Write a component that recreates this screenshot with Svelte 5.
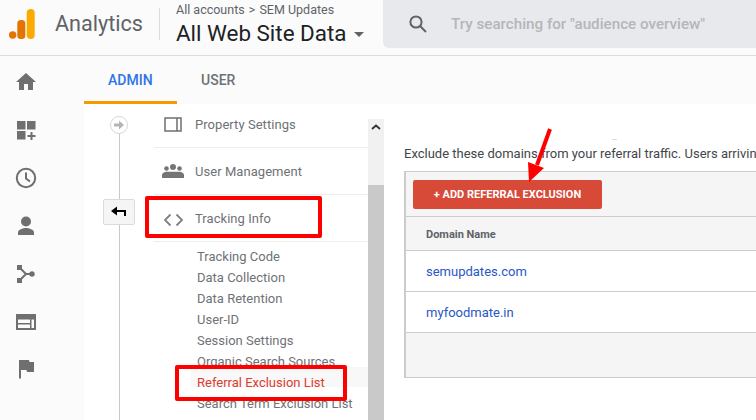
<script>
	const subItems = [
		'Tracking Code',
		'Data Collection',
		'Data Retention',
		'User-ID',
		'Session Settings',
		'Organic Search Sources',
		'Referral Exclusion List',
		'Search Term Exclusion List'
	];
	const domains = ['semupdates.com', 'myfoodmate.in'];
</script>

<div class="page">
	<header class="topbar">
		<svg class="logo" width="26" height="30" viewBox="0 0 26 30">
			<circle cx="3.7" cy="26" r="3.7" fill="#e37400" />
			<rect x="8.300" y="11" width="8" height="19" rx="3.500" fill="#e37400" />
			<rect x="17.700" y="0" width="8" height="30" rx="4" fill="#f9ab00" />
		</svg>
		<span class="brand">Analytics</span>
		<div class="view">
			<div class="crumbs">All accounts <span class="sep">&gt;</span> SEM Updates</div>
			<div class="viewname">All Web Site Data <i class="caret"></i></div>
		</div>
		<div class="search">
			<svg width="20" height="20" viewBox="0 0 20 20" fill="none" stroke="#5f6368" stroke-width="2">
				<circle cx="8" cy="8" r="5.6" />
				<path d="M12 12l6 6" />
			</svg>
			<span>Try searching for "audience overview"</span>
		</div>
	</header>

	<div class="below">
		<nav class="rail">
			<svg viewBox="0 0 24 24" width="24" height="24"><path fill="#6f6f6f" d="M10 20v-6h4v6h5v-8h3L12 3 2 12h3v8z" /></svg>
			<svg viewBox="0 0 24 24" width="24" height="24"><path fill="#6f6f6f" d="M3 3h8.500v8.500H3zM13 3h8.500v8.500H13zM3 13h8.500v8.500H3zM16.500 14h2v3h3v2h-3v3h-2v-3h-3v-2h3z" /></svg>
			<svg viewBox="0 0 24 24" width="24" height="24" fill="none" stroke="#6f6f6f" stroke-width="2"><circle cx="12" cy="12" r="9.200" /><path d="M12 6.500V12.500l4 3" /></svg>
			<svg viewBox="0 0 24 24" width="24" height="24"><circle cx="12" cy="7.500" r="5" fill="#6f6f6f" /><path fill="#6f6f6f" d="M4 21v-2.500c0-3 5-4.500 8-4.500s8 1.500 8 4.500V21z" /></svg>
			<svg viewBox="0 0 24 24" width="24" height="24"><path fill="none" stroke="#6f6f6f" stroke-width="2" d="M6 6l6 6-6 6M12 12h6" /><rect x="3" y="3" width="5" height="5" fill="#6f6f6f" /><rect x="3" y="16" width="5" height="5" fill="#6f6f6f" /><circle cx="18" cy="12" r="2.700" fill="#6f6f6f" /></svg>
			<svg viewBox="0 0 24 24" width="24" height="24"><path fill="#6f6f6f" fill-rule="evenodd" d="M2 4h20v16H2zM4 9.500v3.500h12V9.500zM4 14.500V18h12v-3.500zM17.500 9.500V18H20V9.500z" /></svg>
			<svg viewBox="0 0 24 24" width="24" height="24"><path fill="#6f6f6f" d="M5 2h10l.5 2H20v10h-7l-.500-2H7v8.500H5z" /></svg>
		</nav>

		<main class="main">
			<div class="tabs">
				<div class="tab active">ADMIN</div>
				<div class="tab">USER</div>
			</div>

			<div class="columns">
				<div class="timeline">
					<div class="stepdot">
						<svg width="12" height="12" viewBox="0 0 12 12"><path fill="#b5b5b5" d="M1 4.500h5V1.500L11 6 6 10.500v-3H1z" /></svg>
					</div>
					<button class="back" aria-label="Back">
						<svg width="16" height="12" viewBox="0 0 16 12"><path fill="none" stroke="#000" stroke-width="2" d="M2 5h12v5" /><path d="M0 5l6-4.500v9z" /></svg>
					</button>
				</div>

				<div class="sidenav">
					<div class="navitem first">
						<span class="navicon">
							<svg width="18" height="15" viewBox="0 0 18 15"><path fill="none" stroke="#6f6f6f" stroke-width="1.500" d="M1 1h16v13H1zM13 1v13" /></svg>
						</span>
						Property Settings
					</div>
					<div class="navitem">
						<span class="navicon">
							<svg width="22" height="14" viewBox="0 0 22 14"><g fill="#757575"><circle cx="11" cy="3" r="3" /><circle cx="4.500" cy="4.500" r="2.300" /><circle cx="17.500" cy="4.500" r="2.300" /><path d="M0 14v-3c0-2 2.500-3.300 5-3.300h12c2.500 0 5 1.300 5 3.300v3z" /></g></svg>
						</span>
						User Management
					</div>
					<div class="navitem">
						<span class="navicon">
							<svg class="codeicon" width="21" height="14" viewBox="0 0 21 14" fill="none" stroke="#808080" stroke-width="1.800"><path d="M7.500 1.500L2 7l5.500 5.500M13.500 1.500L19 7l-5.500 5.500" /></svg>
						</span>
						Tracking Info
					</div>
					<ul class="sublist">
						{#each subItems as item, i}
							<li class:current={i === 6}>{item}</li>
						{/each}
					</ul>
				</div>

				<div class="scrollbar">
					<svg width="10" height="6" viewBox="0 0 10 6"><path fill="none" stroke="#333" stroke-width="1.800" d="M1 5l4-3.500L9 5" /></svg>
					<div class="thumb"></div>
				</div>

				<section class="panel">
					<div class="smudge"></div>
					<p class="intro">Exclude these domains from your referral traffic. Users arriving</p>
					<div class="tablebox">
						<div class="toolbar">
							<button class="addbtn">+ ADD REFERRAL EXCLUSION</button>
						</div>
						<div class="thead">Domain Name</div>
						{#each domains as domain}
							<div class="row"><span class="link">{domain}</span></div>
						{/each}
						<div class="tfoot"></div>
					</div>
				</section>
			</div>
		</main>
	</div>

	<div class="mark box1"></div>
	<div class="mark box2"></div>
	<svg class="arrow" width="40" height="70" viewBox="0 0 40 70">
		<path d="M30 2L17 38" stroke="#f00" stroke-width="4" fill="none" />
		<path d="M9 55L8 35L24 41z" fill="#f00" />
	</svg>
</div>

<style>
	:global(body) {
		margin: 0;
		background: #fff;
	}

	.page {
		position: relative;
		width: 756px;
		height: 420px;
		overflow: hidden;
		background: #fafbfa;
		font-family: Roboto, "Liberation Sans", sans-serif;
	}

	.topbar {
		display: flex;
		align-items: flex-start;
		height: 55px;
		border-bottom: 1px solid #dcdcdc;
		box-sizing: content-box;
	}

	.logo {
		margin: 9px 0 0 9px;
		flex: none;
	}

	.brand {
		margin: 8px 0 0 20px;
		width: 104px;
		height: 32px;
		line-height: 32px;
		font-size: 21.6px;
		color: #5f6368;
		border-right: 1px solid #dadce0;
		flex: none;
	}

	.view {
		margin-left: 16px;
		width: 207px;
		flex: none;
	}

	.crumbs {
		margin-top: 1px;
		font-size: 12.5px;
		line-height: 17px;
		color: #5f6368;
	}

	.sep {
		margin: 0 1px;
	}

	.viewname {
		margin-top: 1px;
		font-size: 22.4px;
		line-height: 28px;
		color: #202124;
		white-space: nowrap;
	}

	.caret {
		display: inline-block;
		width: 0;
		height: 0;
		margin-left: 2px;
		vertical-align: 4px;
		border-left: 5px solid transparent;
		border-right: 5px solid transparent;
		border-top: 5px solid #5f6368;
	}

	.search {
		display: flex;
		align-items: center;
		flex: 1;
		height: 48px;
		padding-left: 25px;
		background: #e8e9ec;
		border-radius: 0 0 0 6px;
		font-size: 15.2px;
		font-weight: 500;
		color: #b4b6ba;
		white-space: nowrap;
	}

	.search span {
		margin-left: 23px;
	}

	.below {
		display: flex;
		height: 364px;
	}

	.rail {
		display: flex;
		flex-direction: column;
		align-items: center;
		gap: 24px;
		width: 52px;
		padding-top: 14px;
		margin-right: 32px;
		flex: none;
	}

	.main {
		flex: 1;
		min-width: 0;
	}

	.tabs {
		display: flex;
		height: 48px;
		margin-left: -32px;
		padding-left: 32px;
		background: #fafbfa;
	}

	.tab {
		height: 46px;
		line-height: 49px;
		padding: 0 24px;
		font-size: 14px;
		font-weight: 500;
		color: #6e7176;
	}

	.tab.active {
		width: 45px;
		color: #2f74e6;
		border-bottom: 3px solid #f59b00;
		height: 45px;
	}

	.columns {
		display: flex;
		height: 316px;
		margin-left: -32px;
		padding-left: 32px;
		background: #fff;
		background-clip: content-box;
	}

	.timeline {
		position: relative;
		display: flex;
		flex-direction: column;
		align-items: center;
		width: 70px;
		flex: none;
	}

	.timeline::before {
		content: "";
		position: absolute;
		left: 35px;
		top: 28px;
		bottom: 0;
		width: 1px;
		background: #c8c8c8;
	}

	.stepdot {
		position: relative;
		display: flex;
		align-items: center;
		justify-content: center;
		width: 16px;
		height: 16px;
		margin-top: 12px;
		border: 1px solid #d8d8d8;
		border-radius: 50%;
		background: #fff;
	}

	.back {
		position: relative;
		display: flex;
		align-items: center;
		justify-content: center;
		width: 32px;
		height: 26px;
		margin-top: 65px;
		padding: 0;
		border: 1px solid #dcdcdc;
		border-radius: 2px;
		background: #f5f5f5;
	}

	.sidenav {
		width: 214px;
		flex: none;
		background: #fff;
		font-size: 13px;
		color: #6f7276;
	}

	.navitem {
		display: flex;
		align-items: center;
		height: 46px;
		border-bottom: 1px solid #eeeeee;
		font-size: 13px;
		letter-spacing: 0.05px;
	}

	.navitem.first {
		height: 41px;
		padding-bottom: 2px;
	}

	.navicon {
		display: flex;
		justify-content: center;
		width: 38px;
		margin-right: 3px;
		flex: none;
	}

	.codeicon {
		margin-top: 3px;
	}

	.sublist {
		list-style: none;
		margin: 4px 0 0;
		padding: 0;
	}

	.sublist li {
		height: 21px;
		line-height: 21px;
		padding-left: 43px;
		white-space: nowrap;
	}

	.sublist li.current {
		margin: -5px 0 6px 37px;
		padding: 5px 0 0 6px;
		height: 20px;
		box-sizing: border-box;
		background: #f8f8f8;
		color: #dc3c32;
	}

	.scrollbar {
		position: relative;
		display: flex;
		flex-direction: column;
		align-items: center;
		width: 16px;
		margin-top: 15px;
		padding-top: 5px;
		box-sizing: border-box;
		background: #f1f1f1;
		flex: none;
	}

	.thumb {
		position: absolute;
		left: 0;
		right: 0;
		top: 66px;
		bottom: 0;
		background: #c9c9c9;
	}

	.panel {
		position: relative;
		margin-left: 20px;
		flex: 1;
		min-width: 0;
		background: #fff;
		height: 316px;
	}

	.smudge {
		position: absolute;
		left: 208px;
		top: 35px;
		width: 5px;
		height: 1px;
		background: #dddddd;
	}

	.intro {
		margin: 41px 0 0;
		height: 26px;
		line-height: 17px;
		font-size: 13px;
		color: #43464a;
		white-space: nowrap;
		overflow: hidden;
	}

	.tablebox {
		width: 400px;
		box-sizing: border-box;
		border: 1px solid #cccccc;
		border-left-width: 2px;
		background: #f5f5f5;
	}

	.toolbar {
		height: 45px;
		padding: 8px 0 0 7px;
		box-sizing: border-box;
		border-bottom: 1px solid #cccccc;
	}

	.addbtn {
		display: block;
		width: 189px;
		height: 29px;
		padding: 0;
		border: none;
		border-radius: 2px;
		background: #d84a38;
		color: #fff;
		font-family: inherit;
		font-size: 11px;
		font-weight: 700;
	}

	.thead {
		height: 33px;
		line-height: 35px;
		padding-left: 20px;
		font-size: 11px;
		font-weight: 700;
		color: #5f6368;
		border-bottom: 1px solid #cccccc;
	}

	.row {
		height: 40px;
		line-height: 41px;
		padding-left: 20px;
		background: #fff;
		border-bottom: 1px solid #cccccc;
		font-size: 13px;
	}

	.link {
		color: #2a56c6;
	}

	.tfoot {
		height: 44px;
	}

	.mark {
		position: absolute;
		box-sizing: border-box;
		border: 4px solid #f00;
		border-radius: 2px;
	}

	.box1 {
		left: 145px;
		top: 196px;
		width: 177px;
		height: 42px;
	}

	.box2 {
		left: 175px;
		top: 365px;
		width: 172px;
		height: 36px;
	}

	.arrow {
		position: absolute;
		left: 520px;
		top: 127px;
	}
</style>
